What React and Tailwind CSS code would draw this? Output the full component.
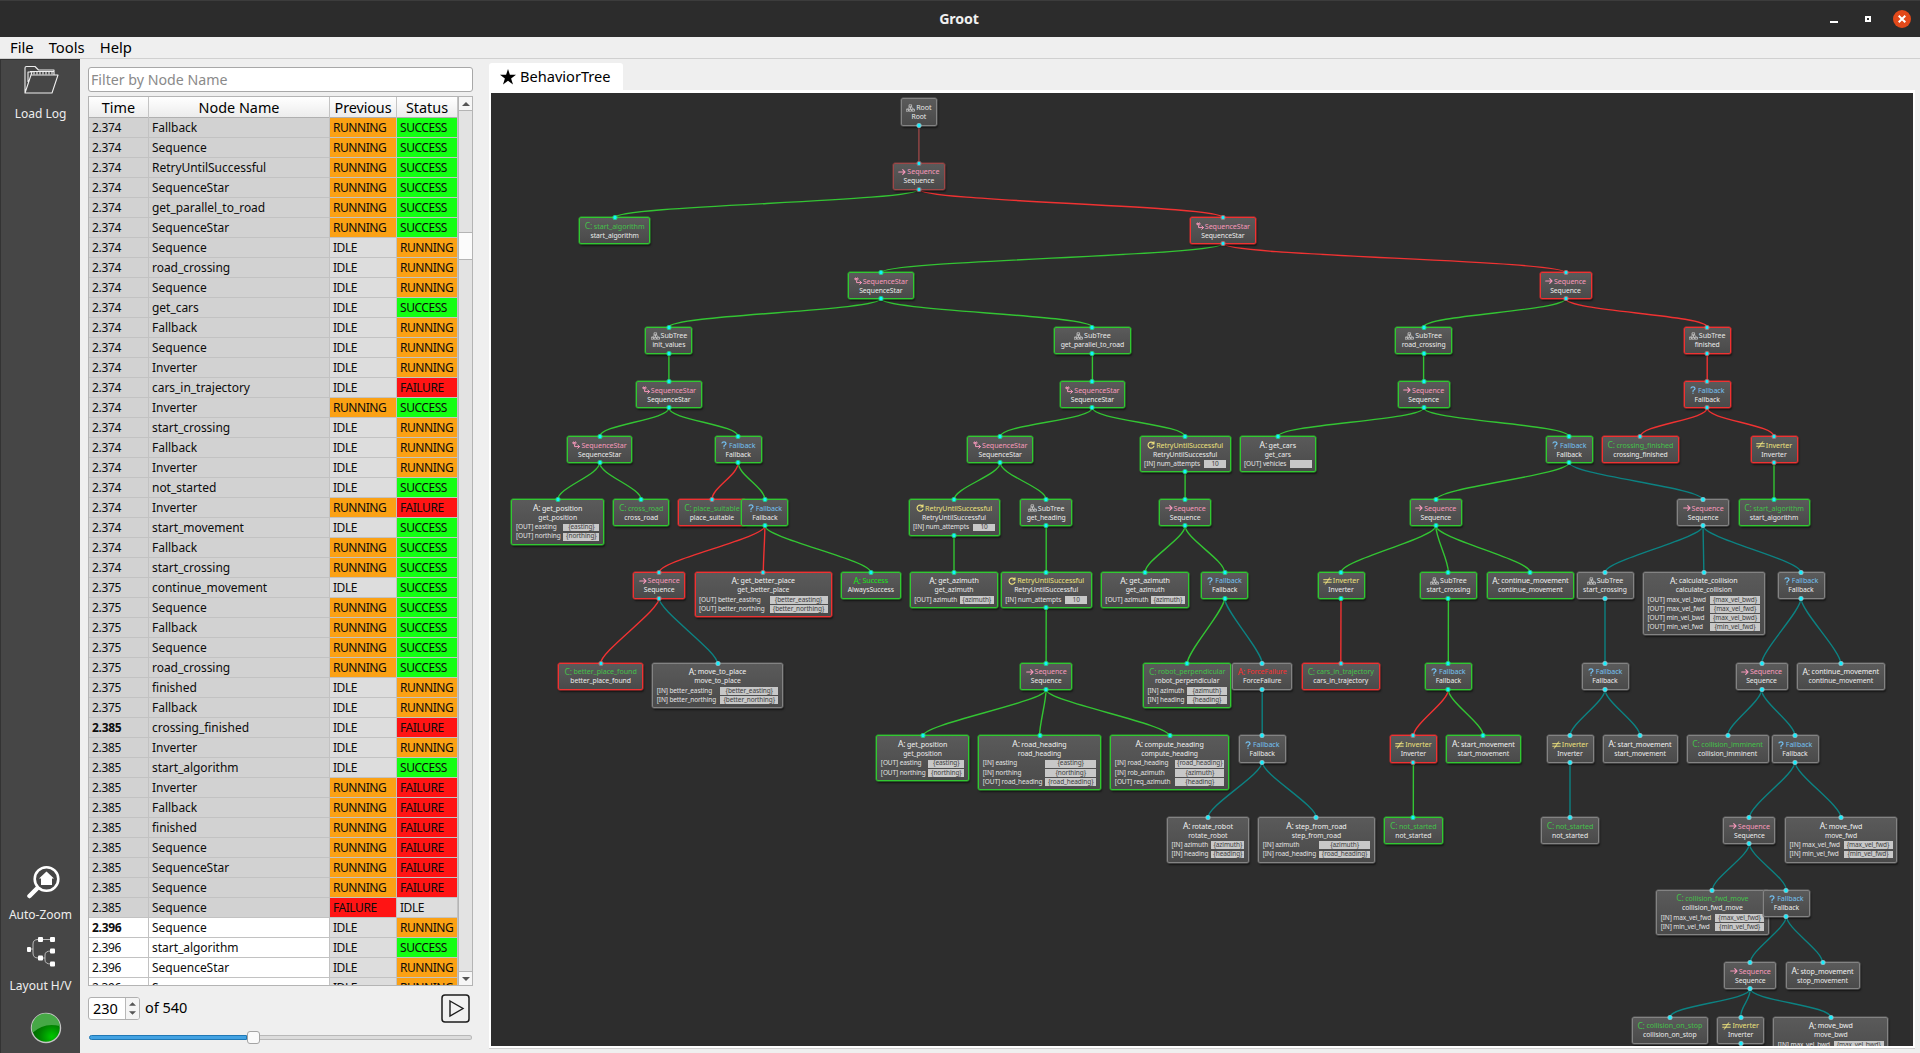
import React from "react";

const STATUS = { R: "RUNNING", S: "SUCCESS", F: "FAILURE", I: "IDLE" };
const CELL = {
  R: "bg-[#fba114]",
  S: "bg-[#14ff14]",
  F: "bg-[#ff1414]",
  I: "bg-[#dddddd]",
};

const LOG = `2.374 Fallback R S
2.374 Sequence R S
2.374 RetryUntilSuccessful R S
2.374 SequenceStar R S
2.374 get_parallel_to_road R S
2.374 SequenceStar R S
2.374 Sequence I R
2.374 road_crossing I R
2.374 Sequence I R
2.374 get_cars I S
2.374 Fallback I R
2.374 Sequence I R
2.374 Inverter I R
2.374 cars_in_trajectory I F
2.374 Inverter R S
2.374 start_crossing I R
2.374 Fallback I R
2.374 Inverter I R
2.374 not_started I S
2.374 Inverter R F
2.374 start_movement I S
2.374 Fallback R S
2.374 start_crossing R S
2.375 continue_movement I S
2.375 Sequence R S
2.375 Fallback R S
2.375 Sequence R S
2.375 road_crossing R S
2.375 finished I R
2.375 Fallback I R
2.385 crossing_finished I F
2.385 Inverter I R
2.385 start_algorithm I S
2.385 Inverter R F
2.385 Fallback R F
2.385 finished R F
2.385 Sequence R F
2.385 SequenceStar R F
2.385 Sequence R F
2.385 Sequence F I
2.396 Sequence I R
2.396 start_algorithm I S
2.396 SequenceStar I R
2.396 Sequence I R`
  .split("\n")
  .map((l) => l.split(" "));

const BOLD_ROWS = [30, 40];
const FIRST_PENDING = 40;

const LEVEL = [98.4, 162.6, 217, 272, 326.6, 381.2, 436, 499.2, 571.7, 662.8, 735.4, 817, 889.5, 962, 1016.8];

// [id, parent, centre x, level, width, kind, caption, name, state, fields, value width]
const NODES = [
  ["root", null, 918.9, 0, 36.5, "tree", "Root", "Root", "n"],
  ["s1", "root", 918.9, 1, 52, "seq", "Sequence", "Sequence", "d"],
  ["sa", "s1", 614.7, 2, 71, "C", "start_algorithm", "start_algorithm", "g"],
  ["ss1", "s1", 1222.9, 2, 65.5, "star", "SequenceStar", "SequenceStar", "r"],
  ["ss2", "ss1", 880.8, 3, 65.5, "star", "SequenceStar", "SequenceStar", "g"],
  ["s2", "ss1", 1565.5, 3, 52, "seq", "Sequence", "Sequence", "r"],
  ["iv", "ss2", 668.9, 4, 47, "tree", "SubTree", "init_values", "g"],
  ["gp", "ss2", 1092.4, 4, 77, "tree", "SubTree", "get_parallel_to_road", "g"],
  ["rc", "s2", 1423.6, 4, 57, "tree", "SubTree", "road_crossing", "g"],
  ["fi", "s2", 1707.2, 4, 47, "tree", "SubTree", "finished", "r"],
  ["ss3", "iv", 668.9, 5, 65.5, "star", "SequenceStar", "SequenceStar", "g"],
  ["ss4", "gp", 1092.4, 5, 65.5, "star", "SequenceStar", "SequenceStar", "g"],
  ["s3", "rc", 1423.6, 5, 52, "seq", "Sequence", "Sequence", "g"],
  ["f1", "fi", 1707.2, 5, 47, "fall", "Fallback", "Fallback", "r"],
  ["ss5", "ss3", 599.6, 6, 65.5, "star", "SequenceStar", "SequenceStar", "g"],
  ["f2", "ss3", 738.2, 6, 47, "fall", "Fallback", "Fallback", "g"],
  ["ss6", "ss4", 1000.2, 6, 65.5, "star", "SequenceStar", "SequenceStar", "g"],
  ["r1", "ss4", 1185.1, 6, 91, "retry", "RetryUntilSuccessful", "RetryUntilSuccessful", "g", ["IN num_attempts 10"], 22],
  ["gc", "s3", 1277.8, 6, 76.5, "A", "get_cars", "get_cars", "g", ["OUT vehicles"], 22],
  ["f3", "s3", 1569.2, 6, 47, "fall", "Fallback", "Fallback", "g"],
  ["cf", "f1", 1640.4, 6, 77, "C", "crossing_finished", "crossing_finished", "r"],
  ["i1", "f1", 1774, 6, 47, "inv", "Inverter", "Inverter", "r"],
  ["gpo", "ss5", 557.7, 7, 92.5, "A", "get_position", "get_position", "g", ["OUT easting {easting}", "OUT northing {northing}"], 36],
  ["cr", "ss5", 641.2, 7, 56, "C", "cross_road", "cross_road", "g"],
  ["ps", "f2", 711.9, 7, 67.5, "C", "place_suitable", "place_suitable", "r"],
  ["f4", "f2", 764.9, 7, 47, "fall", "Fallback", "Fallback", "g"],
  ["r2", "ss6", 954, 7, 91, "retry", "RetryUntilSuccessful", "RetryUntilSuccessful", "g", ["IN num_attempts 10"], 22],
  ["gh", "ss6", 1046.2, 7, 52, "tree", "SubTree", "get_heading", "g"],
  ["s4", "r1", 1185.1, 7, 52, "seq", "Sequence", "Sequence", "g"],
  ["s5", "f3", 1435.8, 7, 52, "seq", "Sequence", "Sequence", "g"],
  ["s6", "f3", 1703.1, 7, 52, "seq", "Sequence", "Sequence", "n"],
  ["sa2", "i1", 1774, 7, 71, "C", "start_algorithm", "start_algorithm", "g"],
  ["s7", "f4", 659.1, 8, 52, "seq", "Sequence", "Sequence", "r"],
  ["gb", "f4", 763.3, 8, 137.5, "A", "get_better_place", "get_better_place", "r", ["OUT better_easting {better_easting}", "OUT better_northing {better_northing}"], 58],
  ["as", "f4", 870.8, 8, 59.5, "AS", "Success", "AlwaysSuccess", "g"],
  ["ga", "r2", 954, 8, 88.5, "A", "get_azimuth", "get_azimuth", "g", ["OUT azimuth {azimuth}"], 34],
  ["r3", "gh", 1046.2, 8, 91, "retry", "RetryUntilSuccessful", "RetryUntilSuccessful", "g", ["IN num_attempts 10"], 22],
  ["ga2", "s4", 1145.1, 8, 88.5, "A", "get_azimuth", "get_azimuth", "g", ["OUT azimuth {azimuth}"], 34],
  ["f5", "s4", 1224.6, 8, 47, "fall", "Fallback", "Fallback", "g"],
  ["i2", "s5", 1341, 8, 47, "inv", "Inverter", "Inverter", "g"],
  ["sc", "s5", 1448.4, 8, 57, "tree", "SubTree", "start_crossing", "g"],
  ["cm", "s5", 1530.4, 8, 87.5, "A", "continue_movement", "continue_movement", "g"],
  ["sc2", "s6", 1605, 8, 57, "tree", "SubTree", "start_crossing", "n"],
  ["cc", "s6", 1703.8, 8, 121.5, "A", "calculate_collision", "calculate_collision", "n", ["OUT max_vel_bwd {max_vel_bwd}", "OUT max_vel_fwd {max_vel_fwd}", "OUT min_vel_bwd {max_vel_bwd}", "OUT min_vel_fwd {min_vel_fwd}"], 50],
  ["f6", "s6", 1801, 8, 47, "fall", "Fallback", "Fallback", "n"],
  ["bp", "s7", 600.6, 9, 85, "C", "better_place_found", "better_place_found", "r"],
  ["mp", "s7", 717.5, 9, 130.5, "A", "move_to_place", "move_to_place", "n", ["IN better_easting {better_easting}", "IN better_northing {better_northing}"], 58],
  ["s8", "r3", 1046.1, 9, 52, "seq", "Sequence", "Sequence", "g"],
  ["rp", "f5", 1187.2, 9, 88.5, "C", "robot_perpendicular", "robot_perpendicular", "g", ["IN azimuth {azimuth}", "IN heading {heading}"], 40],
  ["ff", "f5", 1262.2, 9, 60, "FF", "ForceFailure", "ForceFailure", "n"],
  ["ct", "i2", 1340.8, 9, 78, "C", "cars_in_trajectory", "cars_in_trajectory", "r"],
  ["f7", "sc", 1448.3, 9, 47, "fall", "Fallback", "Fallback", "g"],
  ["f8", "sc2", 1605, 9, 47, "fall", "Fallback", "Fallback", "n"],
  ["s9", "f6", 1761.5, 9, 52, "seq", "Sequence", "Sequence", "n"],
  ["cm2", "f6", 1840.8, 9, 87.5, "A", "continue_movement", "continue_movement", "n"],
  ["gp2", "s8", 922.6, 10, 92.5, "A", "get_position", "get_position", "g", ["OUT easting {easting}", "OUT northing {northing}"], 36],
  ["rh", "s8", 1039.5, 10, 122.5, "A", "road_heading", "road_heading", "g", ["IN easting {easting}", "IN northing {northing}", "OUT road_heading {road_heading}"], 51],
  ["ch", "s8", 1169.6, 10, 118.5, "A", "compute_heading", "compute_heading", "g", ["IN road_heading {road_heading}", "IN rob_azimuth {azimuth}", "OUT req_azimuth {heading}"], 49],
  ["f9", "ff", 1262.2, 10, 47, "fall", "Fallback", "Fallback", "n"],
  ["i3", "f7", 1413.4, 10, 47, "inv", "Inverter", "Inverter", "r"],
  ["sm", "f7", 1483.4, 10, 75, "A", "start_movement", "start_movement", "g"],
  ["i4", "f8", 1570, 10, 47, "inv", "Inverter", "Inverter", "n"],
  ["sm2", "f8", 1640, 10, 75, "A", "start_movement", "start_movement", "n"],
  ["ci", "s9", 1727.6, 10, 82, "C", "collision_imminent", "collision_imminent", "n"],
  ["f10", "s9", 1795, 10, 47, "fall", "Fallback", "Fallback", "n"],
  ["rr", "f9", 1207.9, 11, 82, "A", "rotate_robot", "rotate_robot", "n", ["IN azimuth {azimuth}", "IN heading {heading}"], 33],
  ["sf", "f9", 1316.4, 11, 116.5, "A", "step_from_road", "step_from_road", "n", ["IN azimuth {azimuth}", "IN road_heading {road_heading}"], 51],
  ["ns", "i3", 1413.3, 11, 59, "C", "not_started", "not_started", "g"],
  ["ns2", "i4", 1570, 11, 58.5, "C", "not_started", "not_started", "n"],
  ["s10", "f10", 1749.4, 11, 52, "seq", "Sequence", "Sequence", "n"],
  ["mf", "f10", 1841, 11, 112, "A", "move_fwd", "move_fwd", "n", ["IN max_vel_fwd {max_vel_fwd}", "IN min_vel_fwd {min_vel_fwd}"], 49],
  ["cfm", "s10", 1712.4, 12, 112.5, "C", "collision_fwd_move", "collision_fwd_move", "n", ["IN max_vel_fwd {max_vel_fwd}", "IN min_vel_fwd {min_vel_fwd}"], 49],
  ["f11", "s10", 1786.4, 12, 47, "fall", "Fallback", "Fallback", "n"],
  ["s11", "f11", 1750.3, 13, 52, "seq", "Sequence", "Sequence", "n"],
  ["stm", "f11", 1822.5, 13, 74, "A", "stop_movement", "stop_movement", "n"],
  ["cos", "s11", 1669.8, 14, 76.5, "C", "collision_on_stop", "collision_on_stop", "n"],
  ["i5", "s11", 1740.6, 14, 47, "inv", "Inverter", "Inverter", "n"],
  ["mb", "s11", 1830.8, 14, 115, "A", "move_bwd", "move_bwd", "n", ["IN max_vel_bwd {max_vel_bwd}", "IN min_vel_bwd {min_vel_bwd}"], 50],
].map(([id, parent, cx, lvl, w, kind, caption, name, state, fields = [], vw = 0]) => ({
  id, parent, cx, w, kind, caption, name, state, fields, vw,
  y: LEVEL[lvl],
  h: 27.3 + fields.length * 9.1,
}));

const BY_ID = Object.fromEntries(NODES.map((n) => [n.id, n]));
const HAS_CHILD = new Set(NODES.map((n) => n.parent).concat("i5"));

const EDGE = { g: "#33c433", r: "#f03232", n: "#0c8282", d: "#974646" };
const BORDER = {
  g: "border-[#32c832] ring-[#2fae2f]",
  r: "border-[#f03232] ring-[#d03030]",
  n: "border-[#838383] ring-[#6a6a6a]",
  d: "border-[#9c4848] ring-[#844040]",
};
const PORT = { g: "border-[#20d880]", r: "border-[#c06a6a]", n: "border-[#8fc4cc]", d: "border-[#a06a70]" };
const TINT = {
  seq: "text-[#f598ba]", star: "text-[#f598ba]", fall: "text-[#74c0f0]", inv: "text-[#ece07c]",
  retry: "text-[#ece07c]", tree: "text-[#e6e6e6]", A: "text-[#f0f0f0]", C: "text-[#44c04a]",
  AS: "text-[#18e818]", FF: "text-[#f83030]",
};

function KindIcon({ kind }) {
  if (["A", "C", "AS", "FF"].includes(kind))
    return <span className="w-[9px] shrink-0 whitespace-nowrap text-[8.6px] tracking-[-0.2px]">{kind === "C" ? "C:" : "A:"}</span>;
  const s = { fill: "none", stroke: "currentColor", strokeWidth: 1, strokeLinecap: "round", strokeLinejoin: "round" };
  if (kind === "seq")
    return <svg className="mr-[1px] h-2 w-2 shrink-0" viewBox="0 0 8 8" {...s} strokeWidth="1.1"><path d="M.7 4H7M4.7 1.7 7 4 4.7 6.3" /></svg>;
  if (kind === "star")
    return <svg className="mr-[1px] h-2 w-2 shrink-0" viewBox="0 0 8 8" {...s}><path d="M2.6 3.6V5.6H7.4M5.8 3.9 7.4 5.6 5.8 7.3M.5 1.9H4.3M1.3 .9 3.5 2.9M3.5 .9 1.3 2.9" /></svg>;
  if (kind === "fall")
    return <svg className="mr-[2px] h-2 w-[6px] shrink-0" viewBox="0 0 6 8" {...s} strokeWidth="1.2"><path d="M1 2Q1.2.8 3 .8T5 2.4Q5 3.3 3.8 4 3 4.4 3 5.4M3 7.2V7.3" /></svg>;
  if (kind === "inv")
    return <svg className="mr-px h-2 w-[9px] shrink-0" viewBox="0 0 9 8" {...s}><path d="M.7 2.7H8.3M.7 5.2H8.3M6.6.8 2.4 7.2" /></svg>;
  if (kind === "retry")
    return <svg className="mr-px h-2 w-2 shrink-0" viewBox="0 0 8 8" {...s} strokeWidth="1.1"><path d="M6.4 2.2A3 3 0 1 0 6.9 5.2M7 .7V3H4.8" /></svg>;
  return (
    <svg className="mr-[1px] h-2 w-[9px] shrink-0" viewBox="0 0 9 8" {...s} strokeWidth=".6">
      <path d="M3.4.8H5.6V3H3.4zM4.5 3V5.2M3.400 3 1.6 5.2M5.6 3 7.4 5.2M.5 5.2H2.6V7.2H.5zM3.4 5.2H5.6V7.2H3.4zM6.4 5.2H8.5V7.2H6.4z" />
    </svg>
  );
}

function Port({ state, bottom }) {
  return (
    <i
      className={`absolute left-1/2 h-[5px] w-[5px] -translate-x-1/2 rounded-[2px] border bg-[#14f0ff] ${PORT[state]} ${
        bottom ? "-bottom-[3px]" : "-top-[3px]"
      }`}
    />
  );
}

function TreeNode({ n }) {
  return (
    <div
      className={`absolute rounded-[2px] border bg-linear-to-b from-[#5a5a5a] to-[#4a4a4a] pt-[3px] ring-[0.5px] shadow-[1px_2px_2px_rgba(0,0,0,0.55)] ${BORDER[n.state]}`}
      style={{ left: n.cx - n.w / 2 - 491, top: n.y - 93, width: n.w, height: n.h }}
    >
      <div className={`flex h-[10.3px] items-center justify-center text-[7.1px] leading-none ${TINT[n.kind]}`}>
        <KindIcon kind={n.kind} />
        <span className="whitespace-nowrap">{n.caption}</span>
      </div>
      <div className="flex h-[9.5px] items-center justify-center whitespace-nowrap text-[6.8px] leading-none text-[#ececec]">{n.name}</div>
      {n.fields.map((f) => {
        const [dir, key, val] = f.split(" ");
        return (
          <div key={f} className="flex h-[9.1px] items-center justify-between pr-[3.5px] pl-[3.5px] text-[6.5px] leading-none tracking-[-0.1px] text-[#e2e2e2]">
            <span className="whitespace-nowrap">[{dir}] {key}</span>
            <span className="flex h-[7.8px] shrink-0 items-center justify-center bg-[#c8c8c8] whitespace-nowrap text-[#404040]" style={{ width: n.vw }}>
              {val}
            </span>
          </div>
        );
      })}
      {n.parent && <Port state={n.state} />}
      {HAS_CHILD.has(n.id) && <Port state={n.state} bottom />}
    </div>
  );
}

function Canvas() {
  return (
    <div className="relative flex-1 overflow-hidden bg-[#2d2d2d] tracking-[-0.05px]">
      <svg className="absolute inset-0 h-[953px] w-[1422px]" viewBox="491 93 1422 953" fill="none">
        {NODES.filter((n) => n.parent).map((n) => {
          const p = BY_ID[n.parent];
          const y0 = p.y + p.h - 0.7;
          const y1 = n.y + 0.7;
          const d = Math.min((y1 - y0) * 0.45, 12.5);
          return (
            <path key={n.id} d={`M${p.cx} ${y0}C${p.cx} ${y0 + d} ${n.cx} ${y1 - d} ${n.cx} ${y1}`} stroke={EDGE[n.state]} strokeWidth="1.4" />
          );
        })}
      </svg>
      {NODES.map((n) => <TreeNode key={n.id} n={n} />)}
    </div>
  );
}

function Titlebar() {
  return (
    <header className="grid h-[37px] shrink-0 grid-cols-[1fr_auto_1fr] items-center border-t border-[#3c3c3c] bg-[#2c2c2c] text-white">
      <span />
      <span className="-mt-px mr-[2px] text-[14.2px] font-bold tracking-[-0.1px] text-[#f0f0f0]">Groot</span>
      <div className="flex items-center justify-end pr-[9px]">
        <span className="mt-[5px] mr-[27px] h-[2px] w-2 bg-white" />
        <span className="mr-[22px] h-[6px] w-[6px] border-2 border-white" />
        <span className="flex h-[18px] w-[18px] items-center justify-center rounded-full bg-[#e2491a]">
          <svg className="h-2 w-2" viewBox="0 0 8 8" stroke="#fff" strokeWidth="2"><path d="M.7.7 7.3 7.3M7.3.7.7 7.3" /></svg>
        </span>
      </div>
    </header>
  );
}

function Sidebar() {
  return (
    <aside className="flex w-20 shrink-0 flex-col items-center border-t border-l border-[#333] bg-[#464646] text-[12px] leading-4 text-[#eee]">
      <svg className="mt-[5px] h-[30px] w-[36px]" viewBox="0 0 36 30" fill="none" stroke="#eee" strokeWidth="1.1" strokeLinejoin="round">
        <path d="M2 28V3Q2 1.500 3.500 1.500H12L15.500 5H31V9.500M2 28 8 10H35L29 28ZM5 17V7H9L8 10M7 6.500H31" />
        <path d="M11 7V9.500M14 7V9.500M17 7V9.500M20 7V9.500M23 7V9.500M26 7V9.500M29 7V9.500" />
      </svg>
      <span className="mt-[11px]">Load Log</span>
      <span className="flex-1" />
      <svg className="ml-1 h-[34px] w-[34px]" viewBox="0 0 34 34" fill="none" stroke="#fff">
        <circle cx="20.500" cy="14" r="11.800" strokeWidth="2.600" />
        <path d="M11 23.500 3.500 31" strokeWidth="4.500" strokeLinecap="round" />
        <path d="M20.500 6.500 28 13.500H26V20H15V13.500H13Z" fill="#fff" stroke="none" />
      </svg>
      <span className="mt-[8px]">Auto-Zoom</span>
      <svg className="mt-[12px] h-[32px] w-[32px]" viewBox="0 0 32 32" fill="none" stroke="#bbb" strokeWidth="1">
        <path d="M6 14H8M13 4.500Q8 4.500 8 9V18Q8 23 13 23M17 4.500H26M26 16Q20 16 20 20V25Q20 29 26 29M17 23H20" />
        <g fill="#fff" stroke="none">
          <rect x="2" y="12" width="4" height="5" rx="1" /><rect x="13" y="2" width="5" height="5" rx="1" />
          <rect x="25" y="2" width="5" height="5" rx="1" /><rect x="13" y="20.500" width="5" height="5" rx="1" />
          <rect x="25" y="13.500" width="5" height="5" rx="1" /><rect x="25" y="26.500" width="5" height="5" rx="1" />
        </g>
      </svg>
      <span className="mt-[11px]">Layout H/V</span>
      <svg className="mt-[18px] mb-[9px] ml-[10px] h-[32px] w-[32px]" viewBox="0 0 32 32">
        <defs>
          <radialGradient id="led" cx=".7" cy=".8" r=".7"><stop offset="0" stopColor="#00c800" /><stop offset=".6" stopColor="#008200" /><stop offset="1" stopColor="#006400" /></radialGradient>
        </defs>
        <circle cx="16" cy="16" r="14.500" fill="url(#led)" stroke="#c4c4c4" strokeWidth="1.400" />
        <path d="M1.900 17A14 14 0 0 1 29.900 14Q14 10 3 20.500Q2 19 1.900 17Z" fill="#46a846" />
      </svg>
    </aside>
  );
}

function LogTable() {
  const cols = "grid grid-cols-[60px_181px_67px_61px]";
  return (
    <div className="flex h-[890px] w-[385px] border border-[#b4b4b4] bg-white">
      <div className="h-full w-[369px] overflow-hidden">
        <div className={`${cols} h-[21px] border-b border-[#b0b0b0] bg-linear-to-b from-white to-[#ececec] text-center text-[14.4px] leading-[22px]`}>
          <span className="border-r border-[#c4c4c4]">Time</span>
          <span className="border-r border-[#c4c4c4]">Node Name</span>
          <span className="border-r border-[#c4c4c4] tracking-[-0.1px]">Previous</span>
          <span className="border-r border-[#c4c4c4]">Status</span>
        </div>
        {LOG.map(([t, name, prev, st], i) => {
          const bg = i < FIRST_PENDING ? "bg-[#d2d2d2]" : "bg-white";
          const cell = "h-5 border-r border-b border-[#c2c2c2] pl-[3px] leading-[19px]";
          return (
            <div key={i} className={`${cols} text-[12px] text-[#0c0c0c]`}>
              <span className={`${cell} ${bg} tracking-[-0.3px] ${BOLD_ROWS.includes(i) ? "font-bold" : ""}`}>{t}</span>
              <span className={`${cell} ${bg} tracking-[-0.03px]`}>{name}</span>
              <span className={`${cell} ${CELL[prev]} tracking-[-0.45px]`}>{STATUS[prev]}</span>
              <span className={`${cell} ${CELL[st]} tracking-[-0.45px]`}>{STATUS[st]}</span>
            </div>
          );
        })}
      </div>
      <div className="flex w-[14px] flex-col border-l border-[#b4b4b4] bg-[#e3e3e3]">
        <span className="flex h-[14px] items-center justify-center border-b border-[#b4b4b4] bg-[#f6f6f6]">
          <svg className="h-1 w-2" viewBox="0 0 8 4"><path d="M0 4 4 0 8 4Z" fill="#555" /></svg>
        </span>
        <span className="mt-[121px] h-[28px] border-y border-[#b4b4b4] bg-[#fbfbfb]" />
        <span className="flex-1" />
        <span className="flex h-[14px] items-center justify-center border-t border-[#b4b4b4] bg-[#f6f6f6]">
          <svg className="h-1 w-2" viewBox="0 0 8 4"><path d="M0 0 4 4 8 0Z" fill="#555" /></svg>
        </span>
      </div>
    </div>
  );
}

function LogPanel() {
  return (
    <section className="flex w-[409px] shrink-0 flex-col pt-2 pl-2">
      <div className="flex h-[25px] w-[385px] items-center rounded-[3px] border border-[#a8a8a8] bg-white pl-[2px] text-[14.2px] text-[#8a8a8a]">
        Filter by Node Name
      </div>
      <div className="mt-1"><LogTable /></div>
      <div className="mt-[7px] flex h-[30px] w-[385px] items-center text-[14.5px]">
        <div className="flex h-[23px] w-[52px] overflow-hidden rounded-[3px] border border-[#b0b0b0] bg-white">
          <span className="flex-1 pl-[4px] leading-[21px]">230</span>
          <span className="flex w-[14px] flex-col items-center justify-center gap-[5px] border-l border-[#b8b8b8] bg-[#f4f4f4]">
            <svg className="h-1 w-[7px]" viewBox="0 0 8 4"><path d="M0 4 4 0 8 4Z" fill="#555" /></svg>
            <svg className="h-1 w-[7px]" viewBox="0 0 8 4"><path d="M0 0 4 4 8 0Z" fill="#555" /></svg>
          </span>
        </div>
        <span className="ml-[5px]">of 540</span>
        <svg className="mr-[3px] ml-auto h-[29px] w-[29px]" viewBox="0 0 29 29" fill="none" stroke="#1c1c1c">
          <rect x="1" y="1" width="27" height="27" rx="3" strokeWidth="1.500" fill="#f1f1f1" />
          <path d="M9 7 22 14.500 9 22Z" strokeWidth="1.400" />
        </svg>
      </div>
      <div className="mt-[8px] ml-px flex h-[13px] w-[383px] items-center">
        <span className="h-[5px] w-[158px] rounded-l-sm border border-[#2078b4] bg-[#42a2e2]" />
        <span className="h-[13px] w-[13px] rounded-[3px] border border-[#a4a4a4] bg-[#fafafa]" />
        <span className="h-[5px] flex-1 rounded-r-sm border border-l-0 border-[#b8b8b8] bg-[#dcdcdc]" />
      </div>
    </section>
  );
}

export default function App() {
  return (
    <div className="flex h-[1053px] w-[1920px] flex-col overflow-hidden bg-[#efefef] font-['Noto_Sans',sans-serif] text-black">
      <Titlebar />
      <nav className="flex h-[22px] shrink-0 items-center gap-[15px] border-b border-[#d0d0d0] pl-[10px] text-[14.8px]">
        <span>File</span><span>Tools</span><span>Help</span>
      </nav>
      <div className="flex min-h-0 flex-1">
        <Sidebar />
        <LogPanel />
        <main className="flex w-[1426px] flex-col pt-[4px]">
          <div className="flex h-[27px] w-[134px] items-center gap-[4px] rounded-t-[3px] bg-white pl-[11px] text-[14.6px]">
            <svg className="h-4 w-4" viewBox="0 0 16 16"><path d="M8 0 9.900 5.800H16L11.100 9.400 13 15.400 8 11.700 3 15.400 4.900 9.400 0 5.800H6.100Z" /></svg>
            <span>BehaviorTree</span>
          </div>
          <div className="mb-[5px] flex flex-1 border-[2px] border-t-[3px] border-white shadow-[0_1px_0_#d0d0d0]"><Canvas /></div>
        </main>
      </div>
    </div>
  );
}
